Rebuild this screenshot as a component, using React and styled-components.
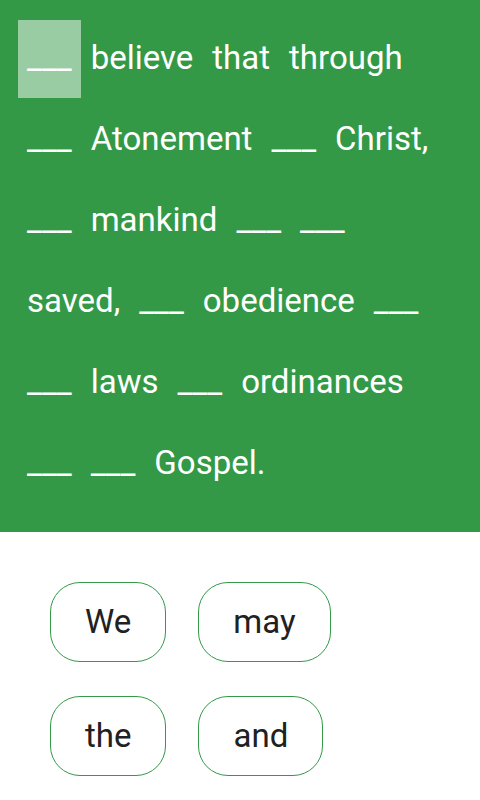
import React from "react";
import styled, { createGlobalStyle } from "styled-components";

const GlobalStyle = createGlobalStyle`
  html, body {
    margin: 0;
    padding: 0;
    background: #fff;
    font-family: Roboto, "Liberation Sans", sans-serif;
  }
`;

const GREEN = "#339947";

const Screen = styled.div`
  width: 480px;
  height: 800px;
  overflow: hidden;
  background: #fff;
`;

const Sentence = styled.div`
  display: flex;
  flex-wrap: wrap;
  align-content: flex-start;
  column-gap: 1px;
  row-gap: 3px;
  padding: 20px 18px 29px 18px;
  background: ${GREEN};
`;

const Word = styled.span`
  display: flex;
  align-items: center;
  box-sizing: border-box;
  height: 78px;
  padding: 0 9px 4px;
  font-size: 33px;
  color: #fff;
  white-space: nowrap;
  background: ${(p) => (p.$active ? "rgba(255, 255, 255, 0.5)" : "transparent")};
`;

const Choices = styled.div`
  display: flex;
  flex-direction: column;
  padding: 33px 34px;
`;

const ChipRow = styled.div`
  display: flex;
`;

const Chip = styled.button`
  height: 80px;
  margin: 17px 16px;
  padding: 0 34px 2px;
  border: 1px solid ${GREEN};
  border-radius: 30px;
  background: #fff;
  color: #212121;
  font-family: Roboto, "Liberation Sans", sans-serif;
  font-size: 33px;
`;

const words = [
  "___", "believe", "that", "through",
  "___", "Atonement", "___", "Christ,",
  "___", "mankind", "___", "___",
  "saved,", "___", "obedience", "___",
  "___", "laws", "___", "ordinances",
  "___", "___", "Gospel.",
];

const choices = [["We", "may"], ["the", "and"]];

export default function App() {
  return (
    <Screen>
      <GlobalStyle />
      <Sentence>
        {words.map((w, i) => (
          <Word key={i} $active={i === 0}>
            {w}
          </Word>
        ))}
      </Sentence>
      <Choices>
        {choices.map((row, r) => (
          <ChipRow key={r}>
            {row.map((c) => (
              <Chip key={c}>{c}</Chip>
            ))}
          </ChipRow>
        ))}
      </Choices>
    </Screen>
  );
}
